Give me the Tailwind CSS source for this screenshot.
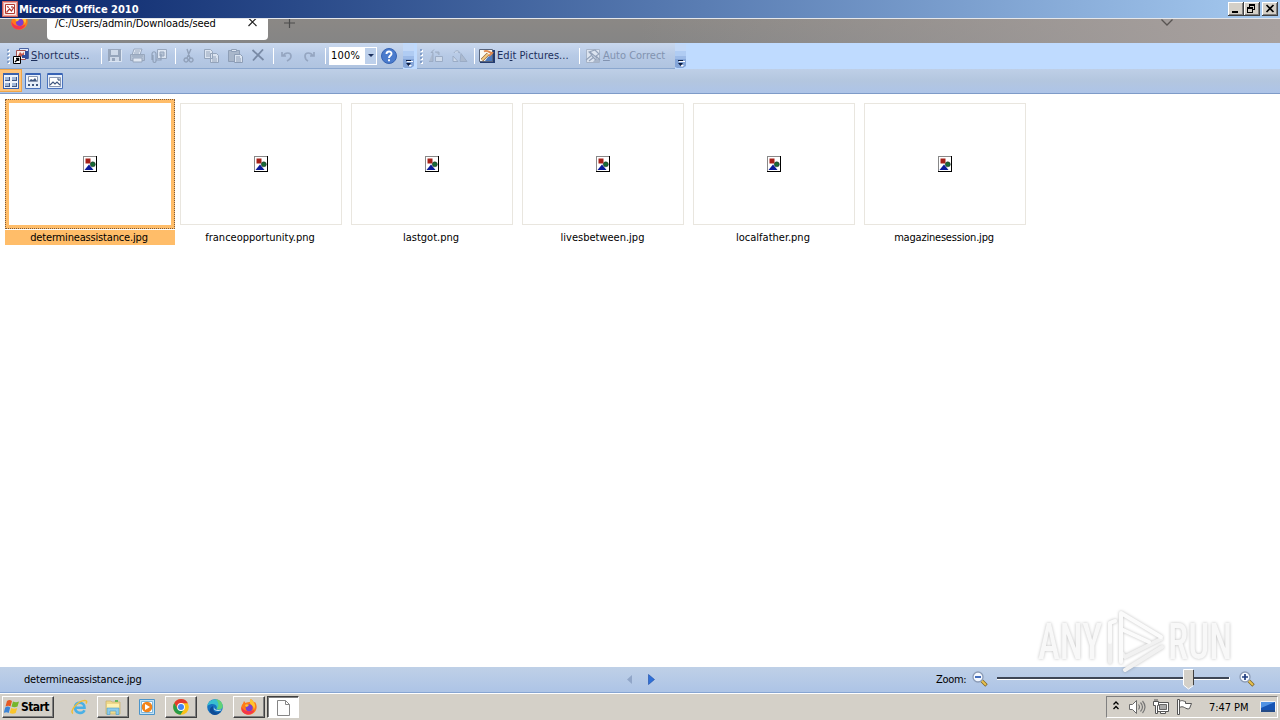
<!DOCTYPE html>
<html lang="en">
<head>
<meta charset="utf-8">
<title>Microsoft Office 2010</title>
<script src="https://cdn.jsdelivr.net/npm/@tailwindcss/browser@4"></script>
</head>
<body class="w-[1280px] h-[720px] overflow-hidden bg-white text-black font-['DejaVu_Sans_Condensed','DejaVu_Sans',sans-serif] [font-stretch:condensed] text-[11px] leading-[14px] whitespace-nowrap flex flex-col">
<svg class="hidden">
  <symbol id="broken" viewBox="0 0 14 16"><path fill="#fff" d="M0 0h14v16H0z"/><path fill="#888" d="M0 0h14v1H0zM0 0h1v16H0z"/><path d="M13 0h1v16h-1zM0 15h14v1H0z"/><path fill="#a52018" d="M2.500 2.500h5v5h-5z"/><circle cx="9.800" cy="8.300" r="2.500" fill="#176b35" stroke="#222" stroke-width=".5"/><path fill="#0a1a9a" d="m6 8.500 4.500 5.500H1.500z"/></symbol>
  <symbol id="more" viewBox="0 0 11 26"><path fill="#9dbbe8" d="M0 8h11v8H0z"/><path fill="#c3d9f8" d="M0 1h11v7H0z"/><path fill="#b0ccf3" d="M0 8h11v5H0z"/><path fill="#84a5d8" d="M0 16h11v7l-3 2H2l-2-1z"/><path fill="#fff" d="M4 18h6v1H4zM5 22l4 0-2 2z"/><path fill="#0c1c40" d="M3 17h5v1H3zM3 20h5l-2.500 3z"/></symbol>
  <symbol id="chrome" viewBox="0 0 16 16"><circle cx="8" cy="8" r="7.800" fill="#fbc116"/><path fill="#e33b2e" d="M1.250 4A7.800 7.800 0 0 1 14.900 4.300H8L4.700 10z"/><path fill="#279b48" d="M1.250 4 4.700 10 8 11.800l3-1.500-3.600 5.500A7.800 7.800 0 0 1 1.250 4"/><circle cx="8" cy="8" r="3.900" fill="#fff"/><circle cx="8" cy="8" r="3" fill="#4285f4"/></symbol>
  <symbol id="fox" viewBox="0 0 16 16"><path fill="#ff7a1a" d="M2 4.500 3 2l1.500 2C6 3 8 3 9 3L9.500 0c2 1 3 2.500 3.500 3.500l1-.5c2 3 2 6 1 8-2 5-9 6.500-13 2.500C-1 11 0 7 2 4.500"/><path fill="#f4364c" d="M.5 8c2 4 6 5 10 4l3-1c-1 4-6 5.800-10 3.500C1 13 .3 10 .5 8"/><circle cx="8.200" cy="8.800" r="3.500" fill="#7a3fd0"/><path fill="#ffc52e" d="M9.500 0c2 1 3 2.500 3.500 3.500 1.500 2 1.500 5-.2 7C13 8 11 6 9.500 5 8.500 4 8.500 2 9.500 0M4 6c1-1 3-1 4 0L6.500 7.500 5 8z"/></symbol>
</svg>

<!-- Title bar -->
<header class="h-[18px] shrink-0 flex items-center bg-linear-to-r from-[#0a246a] to-[#a6caf0] text-white">
  <svg class="ml-[2px] w-4 h-4" viewBox="0 0 16 16"><path fill="#fbe9e4" stroke="#d2605a" d="M.5.500h15v15H.5z"/><path fill="none" stroke="#eba69f" d="M1.500 1.500h13v13h-13z"/><path fill="#fff" stroke="#b43931" d="M3.500 3.500h9v9h-9z"/><path d="m4.500 11.500 3-3.500 2 2 2.500-4M5 5.500l2 1M10 5v2" stroke="#b03a34" stroke-width="1.200" fill="none"/></svg>
  <h1 class="ml-[1px] mt-px w-[122px] font-bold text-[11px] tracking-[-0.02px]">Microsoft Office 2010</h1>
  <div class="ml-auto mr-[2px] flex">
    <svg class="w-[50px] h-[14px]" viewBox="0 0 50 14" shape-rendering="crispEdges">
      <g><path fill="#404040" d="M0 0h16v14H0z"/><path fill="#fff" d="M0 0h15v13H0z"/><path fill="#808080" d="M1 1h14v12H1z"/><path fill="#d4d0c8" d="M1 1h13v11H1z"/></g>
      <g transform="translate(16)"><path fill="#404040" d="M0 0h16v14H0z"/><path fill="#fff" d="M0 0h15v13H0z"/><path fill="#808080" d="M1 1h14v12H1z"/><path fill="#d4d0c8" d="M1 1h13v11H1z"/></g>
      <g transform="translate(34)"><path fill="#404040" d="M0 0h16v14H0z"/><path fill="#fff" d="M0 0h15v13H0z"/><path fill="#808080" d="M1 1h14v12H1z"/><path fill="#d4d0c8" d="M1 1h13v11H1z"/></g>
      <path d="M4 9h6v2H4zM21 2h6v2h-6zM21 2h1v3h-1zM26 2h1v6h-2V7h1zM19 5h6v2h-6zM19 5h1v6h-1zM24 5h1v6h-1zM19 10h6v1h-6z"/>
      <path shape-rendering="auto" stroke="#000" stroke-width="1.700" d="m38.500 3 7 7m0-7-7 7"/>
    </svg>
  </div>
</header>

<!-- Browser tab strip, partly covered -->
<div class="h-[25px] shrink-0 flex items-start border-t border-[#e4e6ea] bg-linear-to-b from-[#8b8885] to-[#858585] overflow-hidden relative">
  <div class="absolute inset-0 bg-linear-to-r from-transparent via-transparent to-[#a8a19f]"></div>
  <svg class="relative ml-[11px] -mt-[6px] w-[17px] h-[17px]"><use href="#fox"/></svg>
  <div class="relative ml-[19px] w-[221px] h-[21px] bg-white rounded-b-[4px] flex items-start">
    <span class="ml-2 -mt-[2px] w-[162px] tracking-[-0.1px]">/C:/Users/admin/Downloads/seed</span>
    <svg class="ml-[31px] -mt-px w-[9px] h-[9px]" viewBox="0 0 9 9"><path stroke="#222" stroke-width="1.200" d="m.5 0 8 8m0-8-8 8"/></svg>
  </div>
  <svg class="relative ml-4 w-[11px] h-[10px]" viewBox="0 0 11 10"><path stroke="#4c4c4c" stroke-width="1.200" d="M5.500 0v9M0 4h11"/></svg>
  <svg class="relative ml-auto mr-[107px] w-3 h-[7px]" viewBox="0 0 12 7"><path fill="none" stroke="#585452" stroke-width="1.300" d="m.5.500 5.500 5.500L11.500.5"/></svg>
</div>

<!-- Toolbars -->
<div class="h-[26px] shrink-0 flex items-center bg-[#bfdbff] text-[#1c2f5c]">
  <div class="w-[403px] h-full flex items-center bg-linear-to-b from-[#c9d8ee] via-[#b7cae6] to-[#b0c4e0] border-b border-[#8ba7cf]">
    <svg class="ml-[6px] w-[4px] h-4" viewBox="0 0 4 16"><path stroke="#fff" stroke-width="2" stroke-dasharray="2 2" d="M3 2v14"/><path stroke="#6f8fc0" stroke-width="1.500" stroke-dasharray="2 2" d="M2 1v14"/></svg>
    <svg class="ml-[3px] w-4 h-4" viewBox="0 0 16 16"><path fill="#dfe7f8" stroke="#4a64a4" d="M6.500.5h9v10h-9z"/><path fill="#f7ecea" stroke="#a35050" d="M3.500 2.500h9v9h-9z"/><path fill="#c25a4e" d="m5 8 2-4 2 2 2-2v5z"/><path fill="#314f9c" d="M12 3h3v8h-3zM9 7h3v3H9z"/><path fill="#fff" stroke="#000" d="M.5 8.500h7v7h-7z"/><path fill="none" stroke="#000" stroke-width="1.300" d="M2 14l3-3M3 10.500h2.600V13"/></svg>
    <span class="ml-[2px] mt-px w-[60px] tracking-[0.15px]"><u>S</u>hortcuts...</span>
    <i class="ml-[10px] w-px h-4 bg-white"></i>
    <svg class="ml-[5px] w-4 h-4 opacity-75" viewBox="0 0 16 16"><path fill="#8c9aae" d="M1 1h13v12H1z"/><path fill="#d5deea" d="M4 2h7v5H4zM3 9h9v4H3z"/><path fill="#8c9aae" d="M5 10h3v4H5z"/><path stroke="#e9f0f9" fill="none" d="M14.500 2v11.500H2"/></svg>
    <svg class="ml-[6px] w-[17px] h-4 opacity-75" viewBox="0 0 17 16"><path fill="#e8edf4" stroke="#8d9bb0" d="M5 1h8l-2 6H3z"/><path fill="#b4c0d0" stroke="#8d9bb0" d="M1.500 6.500h14v6h-14z"/><path fill="#f0f3f8" stroke="#8d9bb0" d="M4 10h9v4H4z"/><path stroke="#8d9bb0" d="M6 3h5M5 5h5M3 8h11"/></svg>
    <svg class="ml-[5px] w-[17px] h-4 opacity-75" viewBox="0 0 17 16"><path fill="#e8edf4" stroke="#8d9bb0" d="M6.500 1.500h9v9h-9z"/><path stroke="#8d9bb0" d="M9 4h4v4H9z" fill="#b3bfce"/><path fill="none" stroke="#8494ab" stroke-width="1.200" d="M1 12V6c0-3 4-3 4 0v7c0 2-3 2-3 0V7M5 12h5V6"/></svg>
    <i class="ml-[7px] w-px h-4 bg-white"></i>
    <svg class="ml-[6px] w-[13px] h-4 opacity-75" viewBox="0 0 13 16"><path stroke="#8493aa" stroke-width="1.400" fill="none" d="M5 1l3 9M9 1 5 10M4 10a2 2 0 1 0 .1 0M9 10a2 2 0 1 0 .1 0"/></svg>
    <svg class="ml-[8px] w-[17px] h-4 opacity-75" viewBox="0 0 17 16"><path fill="#e8edf4" stroke="#8998ad" d="M1.500 1.500h6l2 2v7h-8zM7.500 5.500h6l2 2v7h-8z"/><path stroke="#8998ad" d="M3 4h4M3 6h4M3 8h4M9 9h4M9 11h5M9 13h5"/></svg>
    <svg class="ml-[7px] w-[17px] h-4 opacity-75" viewBox="0 0 17 16"><path fill="#a4b0c1" stroke="#8090a7" d="M1.500 2.500h11v11h-11z"/><path fill="#e8edf4" stroke="#8090a7" d="M4.500 1.500h5v2h-5zM7.500 6.500h6l2 2v6h-8z"/><path stroke="#8090a7" d="M9 9h4M9 11h5M9 13h5"/></svg>
    <svg class="ml-[7px] w-[14px] h-[14px] opacity-85" viewBox="0 0 14 14"><path stroke="#6e7f9a" stroke-width="1.800" d="m1.500 1 11 10M12 .5l-10 11"/></svg>
    <i class="ml-[8px] w-px h-4 bg-white"></i>
    <svg class="ml-[6px] w-[14px] h-[14px] opacity-80" viewBox="0 0 14 14"><path fill="none" stroke="#8d9db8" stroke-width="1.700" d="M2 3v4h4M3 7c2-4 8-4 8 0 0 2-2 4-4 5"/></svg>
    <svg class="ml-[8px] w-[14px] h-[14px] opacity-80" viewBox="0 0 14 14"><path fill="none" stroke="#8d9db8" stroke-width="1.700" d="M12 3v4H8M11 7C9 3 3 3 3 7c0 2 1 4 3 5"/></svg>
    <i class="ml-[9px] w-px h-4 bg-white"></i>
    <div class="ml-[3px] w-[48px] h-[18px] bg-white flex items-center text-black">
      <span class="ml-[2px] w-[34px] text-[11px] tracking-[0.2px]">100%</span>
      <div class="w-[11px] h-4 bg-[#bdd0eb] flex items-center justify-center"><svg class="w-[6px] h-[3px]" viewBox="0 0 6 3"><path fill="#1c2f5c" d="M0 0h6L3 3z"/></svg></div>
    </div>
    <svg class="ml-[4px] w-4 h-4" viewBox="0 0 16 16"><circle cx="8" cy="8" r="7.500" fill="#4a7bcd" stroke="#3563b3"/><path fill="none" stroke="#fff" stroke-width="1.900" d="M5.500 6c0-3.200 5-3.200 5-.3C10.500 7.500 8 7.500 8 10M8 11.200v2"/></svg>
  </div>
  <svg class="w-[11px] h-[26px]"><use href="#more"/></svg>
  <div class="ml-[3px] w-[258px] h-full flex items-center bg-linear-to-b from-[#c9d8ee] via-[#b7cae6] to-[#b0c4e0] border-b border-[#8ba7cf]">
    <svg class="ml-[2px] w-[4px] h-4" viewBox="0 0 4 16"><path stroke="#fff" stroke-width="2" stroke-dasharray="2 2" d="M3 2v14"/><path stroke="#6f8fc0" stroke-width="1.500" stroke-dasharray="2 2" d="M2 1v14"/></svg>
    <svg class="ml-[5px] w-4 h-4 opacity-75" viewBox="0 0 16 16"><path fill="#d7e0ed" stroke="#93a3bb" d="M7.500 8.500h7v5h-7z"/><path fill="#a9b6c9" stroke="#93a3bb" d="M1 13.500h4v-9H3L6 1.500M7 4h4v3"/></svg>
    <svg class="ml-[8px] w-4 h-4 opacity-75" viewBox="0 0 16 16"><path fill="#a9b6c9" stroke="#93a3bb" d="m8 13.500 1-8 6 8z"/><path fill="#d7e0ed" stroke="#93a3bb" d="M1 13.500V8l5 5.500zM2 5c1-3 5-3 6 0l-2-1"/></svg>
    <i class="ml-[6px] w-px h-4 bg-white"></i>
    <svg class="ml-[4px] w-4 h-4" viewBox="0 0 16 16"><path fill="#243c70" d="M1 2h15v13H1z"/><path fill="#fafaf4" stroke="#59657c" d="M.5 1.500h13v12H.5z"/><path fill="#4d7abd" d="m6 13 3-4 4-3v7z"/><path stroke="#8a5a35" stroke-width="3.200" d="m3 12 6-6"/><path stroke="#f5cd82" stroke-width="2.200" d="m3 12 6-6"/><path fill="none" stroke="#e08a50" stroke-width="1.800" d="M5 3.500c3-2 5 1 8 1.500l-3 3"/></svg>
    <span class="ml-[2px] mt-px w-[72px] tracking-[0.05px]">Ed<u>i</u>t Pictures...</span>
    <i class="ml-[10px] w-px h-4 bg-white"></i>
    <svg class="ml-[5px] w-4 h-4 opacity-80" viewBox="0 0 16 16"><path fill="#e6ebf2" stroke="#a3afc1" d="M1.500 1.500h13v13h-13z"/><path fill="#a8b4c6" d="m8 14 3-4 3 1v3z"/><path fill="none" stroke="#8a98ae" stroke-width="1.100" d="m1 12 6-5-3-3 6-2 4 4-3 2 4 4M7 8l4 4M4 13l5-4M5 4l7 6"/></svg>
    <span class="ml-[2px] mt-px text-[#8293b0]"><u>A</u>uto Correct</span>
  </div>
  <svg class="w-[11px] h-[26px]"><use href="#more"/></svg>
</div>

<!-- View switcher -->
<div class="h-[25px] shrink-0 flex items-start bg-linear-to-b from-[#becfe7] via-[#b3c6df] to-[#adc4e8] border-b border-[#7e9bc8]">
  <div class="w-[22px] h-[23px] border border-l-0 border-[#f0a548] bg-[#ffc47a] flex items-center justify-center">
    <svg class="w-4 h-4" viewBox="0 0 16 16" shape-rendering="crispEdges"><path fill="#3a62ae" d="M0 0h16v16H0z"/><path fill="#eef3fb" d="M1 2h14v13H1z"/><path fill="#3f5684" d="M2 4h5v4H2zM9 4h5v4H9zM2 10h5v4H2zM9 10h5v4H9z"/><path fill="#9fb6d8" d="M2 4h4v3H2zM9 4h4v3H9zM2 10h4v3H2zM9 10h4v3H9z"/></svg>
  </div>
  <svg class="ml-[3px] mt-[4px] w-4 h-4" viewBox="0 0 16 16"><path fill="#e7effa" stroke="#4a73bd" d="M.5.500h15v15H.5z"/><path fill="#3762b4" d="M1 0h14v2H1z"/><path fill="#fff" stroke="#8a98b3" d="M3.500 3.500h9v5h-9z"/><path fill="#405880" d="m4 8 2-2 2 1 2-2 2 3zM3 11h2v2H3zM7 11h2v2H7zM11 11h2v2h-2z"/></svg>
  <svg class="ml-[6px] mt-[4px] w-4 h-4" viewBox="0 0 16 16"><path fill="#e7effa" stroke="#4a73bd" d="M.5.500h15v15H.5z"/><path fill="#3762b4" d="M1 0h14v2H1z"/><path fill="#fff" stroke="#8a98b3" d="M2.500 4.500h11v9h-11z"/><path fill="none" stroke="#405880" stroke-width="1.200" d="m3 12 3-3 2 2 2-2 3 3M10 6h2v2"/></svg>
</div>

<!-- Thumbnails -->
<main class="h-[573px] shrink-0 bg-white flex items-start pl-[5px] pt-[5px]">
  <figure class="w-[170px]">
    <div class="h-[130px] border border-dotted border-[#7d5a3c] bg-[#ffbd69] p-[3px]"><div class="bg-white h-full flex items-center justify-center"><svg class="w-[14px] h-4"><use href="#broken"/></svg></div></div>
    <figcaption class="mt-px h-[15px] bg-[#ffbd69] text-center leading-[15px] tracking-[-0.17px] pr-[2px]">determineassistance.jpg</figcaption>
  </figure>
  <figure class="ml-[5px] mt-[4px] w-[162px]">
    <div class="h-[122px] border border-[#e9e6df] flex items-center justify-center"><svg class="w-[14px] h-4"><use href="#broken"/></svg></div>
    <figcaption class="mt-[5px] leading-[15px] text-center pr-[2px]">franceopportunity.png</figcaption>
  </figure>
  <figure class="ml-[9px] mt-[4px] w-[162px]">
    <div class="h-[122px] border border-[#e9e6df] flex items-center justify-center"><svg class="w-[14px] h-4"><use href="#broken"/></svg></div>
    <figcaption class="mt-[5px] leading-[15px] text-center pr-[2px]">lastgot.png</figcaption>
  </figure>
  <figure class="ml-[9px] mt-[4px] w-[162px]">
    <div class="h-[122px] border border-[#e9e6df] flex items-center justify-center"><svg class="w-[14px] h-4"><use href="#broken"/></svg></div>
    <figcaption class="mt-[5px] leading-[15px] text-center pr-px">livesbetween.jpg</figcaption>
  </figure>
  <figure class="ml-[9px] mt-[4px] w-[162px]">
    <div class="h-[122px] border border-[#e9e6df] flex items-center justify-center"><svg class="w-[14px] h-4"><use href="#broken"/></svg></div>
    <figcaption class="mt-[5px] leading-[15px] text-center pr-[2px]">localfather.png</figcaption>
  </figure>
  <figure class="ml-[9px] mt-[4px] w-[162px]">
    <div class="h-[122px] border border-[#e9e6df] flex items-center justify-center"><svg class="w-[14px] h-4"><use href="#broken"/></svg></div>
    <figcaption class="mt-[5px] leading-[15px] text-center pr-[2px] tracking-[-0.2px]">magazinesession.jpg</figcaption>
  </figure>
</main>

<!-- Status bar -->
<div class="h-[26px] shrink-0 flex items-center bg-linear-to-b from-[#bfd0e7] to-[#adc4e6] border-b border-[#87a5d2]">
  <span class="ml-[24px] w-[118px] tracking-[-0.17px]">determineassistance.jpg</span>
  <svg class="ml-[484px] w-[6px] h-[11px]" viewBox="0 0 6 11"><path fill="#91a6c8" d="M6 1v9L1 5.500z"/></svg>
  <svg class="ml-[16px] w-[7px] h-[11px]" viewBox="0 0 7 11"><path fill="#2f70d8" stroke="#1b4ca8" stroke-width=".6" d="M.5.500v10l6-5z"/></svg>
  <span class="ml-[281px] w-[31px] tracking-[-0.3px]">Zoom:</span>
  <svg class="ml-[5px] -mt-[2px] w-4 h-4" viewBox="0 0 16 16"><path stroke="#7b6326" stroke-width="3.400" d="m9.500 9.500 5 5"/><path stroke="#e8c14e" stroke-width="2" d="m9.500 9.500 4.500 4.500"/><circle cx="6" cy="6" r="5" fill="#f5f9ff" stroke="#8c9cb6" stroke-width="1.300"/><path stroke="#2354b0" stroke-width="1.700" d="M3 6h6"/></svg>
  <svg class="ml-[8px] w-[236px] h-[22px]" viewBox="0 0 236 22"><path fill="#3d4655" d="M1 8h232v2H1z"/><path fill="#fff" d="M1 10h233v1H1zM233 8h1v3h-1z"/><path fill="#d4d0c8" d="M187 1h10v15l-5 4-5-4z"/><path fill="none" stroke="#fff" d="M197 .5h-9.500v15.500l5 4"/><path fill="none" stroke="#404040" d="M197.500 1v15.500"/><path fill="none" stroke="#fff" d="m197.500 16.500-5 3.500"/></svg>
  <svg class="ml-[7px] -mt-[2px] w-4 h-4" viewBox="0 0 16 16"><path stroke="#7b6326" stroke-width="3.400" d="m9.500 9.500 5 5"/><path stroke="#e8c14e" stroke-width="2" d="m9.500 9.500 4.500 4.500"/><circle cx="6" cy="6" r="5" fill="#f5f9ff" stroke="#8c9cb6" stroke-width="1.300"/><path stroke="#234080" stroke-width="1.700" d="M3 6h6M6 3v6"/></svg>
</div>

<!-- Taskbar -->
<footer class="h-[27px] shrink-0 flex items-center bg-[#d4d0c8] border-t border-white">
  <button class="ml-[2px] w-[52px] h-[22px] flex items-center border border-white border-r-[#404040] border-b-[#404040] shadow-[inset_-1px_-1px_#808080] font-bold text-[12px]">
    <svg class="ml-px w-4 h-4" viewBox="0 0 16 16"><path fill="#e65a24" d="M3 2c2-1.500 3.500-1 5 0L6.500 7.500c-1.500-1-3-1-5 0z"/><path fill="#76b62d" d="M9 2.500c2 1 4 1 6 0l-1.500 5c-2 1-4 1-6 0z"/><path fill="#3c84d6" d="M1.200 8.500c2-1.500 3.500-1 5 0L4.700 14c-1.500-1-3-1-5 0z"/><path fill="#fac52b" d="M7.200 9c2 1 4 1 6 0l-1.500 5c-2 1-4 1-6 0z"/></svg>
    <span class="ml-px tracking-[-0.6px]">Start</span>
  </button>
  <svg class="ml-[17px] w-[17px] h-4" viewBox="0 0 17 16"><path fill="none" stroke="#4ab0e6" stroke-width="2.600" d="M13.500 11.200c-2 4.200-9.500 3.500-9.500-3 0-6 9.500-6 9.500.5H5"/><path fill="none" stroke="#f1bd35" stroke-width="1.500" d="M2 14.500c-4-2 5-13 12-13 2 0 2 1.500 1 3"/></svg>
  <div class="ml-[9px] w-[32px] h-[22px] flex items-center justify-center border border-white border-r-[#404040] border-b-[#404040] shadow-[inset_-1px_-1px_#808080]">
    <svg class="w-4 h-4" viewBox="0 0 16 16"><path fill="#efd98c" stroke="#c7b066" stroke-width=".7" d="M1 2h5l1 1h8v12H1z"/><path fill="#fff2b0" d="M2 5h12v4H2z"/><path fill="#67b759" d="M10 1h3v2h-3z"/><path fill="#8ccbeb" stroke="#4a9bc8" stroke-width=".6" d="M2 9h12v6.500h-3V12H5v3.500H2z"/></svg>
  </div>
  <svg class="ml-[10px] w-4 h-4" viewBox="0 0 16 16"><path fill="#c5e3f5" stroke="#4b94ca" d="M.5.500h15v15H.5z"/><path fill="#fff" stroke="#7db7dc" d="M2.500 2.500h11v11h-11z"/><circle cx="8" cy="8" r="5.300" fill="#f2841b"/><path fill="#fff" d="m6 5 5 3-5 3z"/></svg>
  <div class="ml-[10px] w-[32px] h-[22px] flex items-center justify-center border border-white border-r-[#404040] border-b-[#404040] shadow-[inset_-1px_-1px_#808080]"><svg class="w-4 h-4"><use href="#chrome"/></svg></div>
  <svg class="ml-[10px] w-4 h-4" viewBox="0 0 16 16"><circle cx="8" cy="8" r="7.800" fill="#1672c0"/><path fill="#38bfd0" d="M.3 7C2-2 14-1.500 15.700 7c.3 4-5 4-6.200 3 1.800-4-4-7-9.200-3"/><path fill="#62d276" d="M9 .3c4 0 7 4 6.700 7.500-.4 2.400-4 3.200-6 2.200C13 6 11 3 9 .3"/><path fill="#0e4b96" d="M6 7c-1 6 4 8 8 5-3 5-9 5-11 1-1-3 1-5 3-6"/><path fill="#d4e8f0" d="M7.500 7.500c-1.500 2 1.500 4.500 7 3l-.5 1c-6 1.500-8.500-1.500-6.500-4"/></svg>
  <div class="ml-[10px] w-[32px] h-[22px] flex items-center justify-center border border-white border-r-[#404040] border-b-[#404040] shadow-[inset_-1px_-1px_#808080]"><svg class="w-4 h-4"><use href="#fox"/></svg></div>
  <div class="ml-[2px] w-[32px] h-[22px] flex items-center justify-center border border-[#404040] border-r-white border-b-white bg-white shadow-[inset_1px_1px_#808080]">
    <svg class="mt-px w-[13px] h-4" viewBox="0 0 13 16"><path fill="#fdfdfd" stroke="#858585" d="M.5.500h8l4 4v11H.5zM8.500.5v4h4"/></svg>
  </div>
  <div class="ml-auto mr-[2px] w-[172px] h-[22px] flex items-center border border-[#808080] border-r-white border-b-white">
    <svg class="ml-[6px] -mt-[3px] w-[6px] h-[9px]" viewBox="0 0 6 9"><path fill="none" stroke="#000" stroke-width="1.300" d="M.5 3.500 3 1l2.500 2.500M.5 8 3 5.500 5.500 8"/></svg>
    <svg class="ml-[10px] w-[17px] h-4" viewBox="0 0 17 16"><path fill="#fff" stroke="#6a6a6a" d="M.5 5.500h3l4-4v13l-4-4h-3z"/><path fill="none" stroke="#777" stroke-width="1.200" d="M9.500 5.500q2 2.500 0 5M11.500 3.500q4 4.500 0 9M13.500 2q5 6 0 12"/></svg>
    <svg class="ml-[7px] w-[17px] h-4" viewBox="0 0 17 16"><path fill="#fff" stroke="#555" d="M4.500 3.500h11v9h-11z"/><path fill="#a8a8a8" stroke="#666" d="M6.500 5.500h7v5h-7z"/><path fill="#fff" stroke="#555" d="M7.500 12.500h5v2h-5zM.5 2.500h5v4h-1v8h-2v-8h-2zM2 0v3M4 0v3"/></svg>
    <svg class="ml-[7px] w-[17px] h-4" viewBox="0 0 17 16"><path fill="#fff" stroke="#555" d="M.5.500h2v15h-2zM2.500 2.500c3-2 4 0 6 0v2h6l-2 5c-2 1-3 0-5-1-2-1-3-1-5 0z"/></svg>
    <span class="ml-[15px] mt-px w-[40px] tracking-[-0.05px]">7:47 PM</span>
    <svg class="ml-[11px] w-4 h-4" viewBox="0 0 16 16"><path fill="#1554b4" stroke="#f3f3f3" d="M.5 2.500h15v10H.5z"/><path fill="#4f92e4" d="M1 3h14l-14 6z"/><path fill="#244b86" d="M1 11h14v2H1z"/></svg>
  </div>
</footer>

<!-- Watermark over the window -->
<div class="absolute left-[1036px] top-[606px] w-[200px] h-[68px] pointer-events-none drop-shadow-[0_0_1.500px_rgba(0,0,0,0.25)]">
  <svg class="w-full h-full overflow-visible" viewBox="0 0 200 68">
    <g fill="#f8f8f8" font-family="Roboto, 'Liberation Sans', sans-serif" font-weight="500" font-size="50">
      <text x="2" y="53" textLength="64" lengthAdjust="spacingAndGlyphs">ANY</text>
      <text x="132" y="53" textLength="64" lengthAdjust="spacingAndGlyphs">RUN</text>
    </g>
    <g fill="none" stroke-linejoin="round" stroke-linecap="round" stroke-width="4">
      <path stroke="#f1f1f1" d="M74 56V17l5-2M85 46l4 5 36-18M89 64l37-23"/>
      <path stroke="#fbfbfb" d="M85 56V7l40 24M85 23l28 13M74 36V17l5-2"/>
    </g>
  </svg>
</div>
</body>
</html>
